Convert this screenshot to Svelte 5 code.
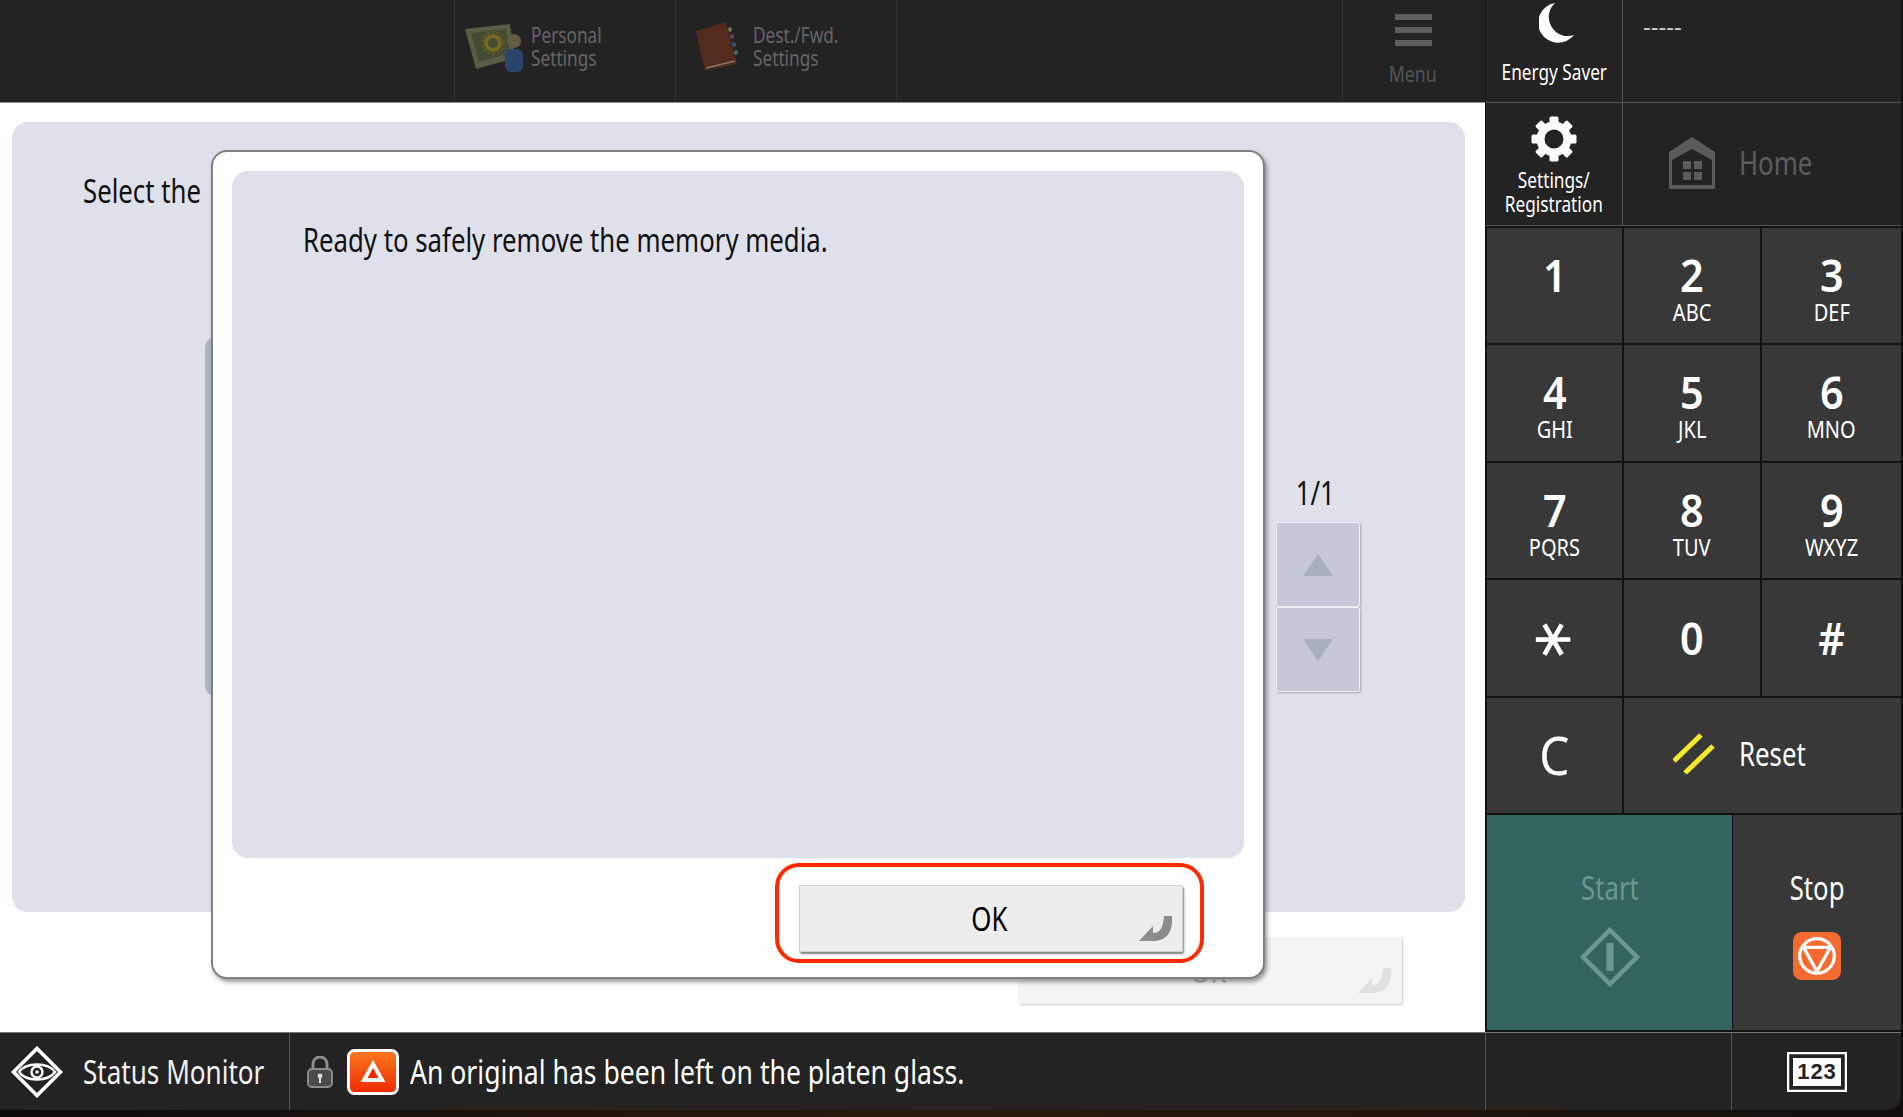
<script>
	const keys = [
		{ n: '1', s: '' },
		{ n: '2', s: 'ABC' },
		{ n: '3', s: 'DEF' },
		{ n: '4', s: 'GHI' },
		{ n: '5', s: 'JKL' },
		{ n: '6', s: 'MNO' },
		{ n: '7', s: 'PQRS' },
		{ n: '8', s: 'TUV' },
		{ n: '9', s: 'WXYZ' },
		{ n: '∗', s: '' },
		{ n: '0', s: '' },
		{ n: '#', s: '' }
	];
	const teeth = [0, 45, 90, 135, 180, 225, 270, 315];
</script>

{#snippet returnArrow(color)}
	<svg class="return" width="34" height="26" viewBox="0 0 34 26">
		<path d="M0 25 L14 10 L14 17 C20 17 24 14 25 0 L33 0 C34 16 28 25 14 25 Z" fill={color} />
	</svg>
{/snippet}

<div class="screen">
	<div class="left">
		<header class="topbar">
			<div class="tb-spacer"></div>
			<div class="tb-item">
				<svg width="58" height="52" viewBox="0 0 58 52">
					<path d="M0 7 L45 2 L50 36 L11 47 Z" fill="#62684f" />
					<path d="M6 11 L41 7 L45 31 L14 40 Z" fill="#4a5238" />
					<circle cx="28" cy="21" r="7" fill="none" stroke="#85751f" stroke-width="4" />
					<circle cx="28" cy="21" r="11" fill="none" stroke="#6e6422" stroke-width="2" stroke-dasharray="3 2" />
					<circle cx="49" cy="19" r="7" fill="#75654a" />
					<rect x="40" y="27" width="18" height="23" rx="6" fill="#2c4a78" />
				</svg>
				<span class="txt tight">Personal<br />Settings</span>
			</div>
			<div class="tb-item book">
				<svg width="42" height="50" viewBox="0 0 42 50">
					<path d="M0 9 L30 0 L41 42 L9 49 Z" fill="#5c2d1b" />
					<path d="M10 46 L39 39" stroke="#9a8478" stroke-width="1.5" />
					<path d="M32 6 l3 -1 l1 4 l-3 1 Z" fill="#8c8c4a" />
					<path d="M34 13 l3 -1 l1 4 l-3 1 Z" fill="#7d4a80" />
					<path d="M36 21 l3 -1 l1 4 l-3 1 Z" fill="#3f6c8c" />
					<path d="M38 29 l3 -1 l1 4 l-3 1 Z" fill="#4a8c6a" />
				</svg>
				<span class="txt tight">Dest./Fwd.<br />Settings</span>
			</div>
			<div class="tb-fill"></div>
			<div class="tb-menu">
				<i></i><i></i><i></i>
				<span class="txt mid">Menu</span>
			</div>
		</header>

		<main class="main">
			<section class="panel">
				<h1 class="txt">Select the</h1>
				<div class="panel-body">
					<div class="list"></div>
					<div class="pager">
						<div class="page-no"><span class="txt mid">1/1</span></div>
						<div class="page-btn"><b class="up"></b></div>
						<div class="page-btn"><b class="down"></b></div>
					</div>
				</div>
			</section>
			<div class="under-foot">
				<button class="under-ok"><span class="txt mid">OK</span>{@render returnArrow('#e0e0e0')}</button>
			</div>
		</main>
	</div>

	<aside class="side">
		<div class="sys">
			<div class="sys-cell energy">
				<svg width="36" height="40" viewBox="0 0 36 40">
					<path d="M16 0 A20 20 0 1 0 35 32 A19 19 0 0 1 16 0 Z" fill="#fff" />
				</svg>
				<span class="txt mid">Energy Saver</span>
			</div>
			<div class="sys-cell dashes">-----</div>
			<div class="sys-cell settings">
				<svg width="46" height="46" viewBox="0 0 46 46">
					<circle cx="23" cy="23" r="13.5" fill="none" stroke="#fff" stroke-width="8" />
					{#each teeth as t}
						<rect x="18.5" y="0.5" width="9" height="10" rx="1.5" fill="#fff" transform="rotate({t} 23 23)" />
					{/each}
				</svg>
				<span class="txt mid">Settings/<br />Registration</span>
			</div>
			<div class="sys-cell home">
				<svg width="46" height="52" viewBox="0 0 46 52">
					<path d="M23 0 L46 15 V52 H0 V15 Z" fill="#5b5b5b" />
					<path d="M3 23 L23 12 L43 23 V48 H3 Z" fill="#232323" />
					<rect x="14" y="24" width="8" height="8" fill="#5b5b5b" />
					<rect x="25" y="24" width="8" height="8" fill="#5b5b5b" />
					<rect x="14" y="35" width="8" height="8" fill="#5b5b5b" />
					<rect x="25" y="35" width="8" height="8" fill="#5b5b5b" />
				</svg>
				<span class="txt">Home</span>
			</div>
		</div>

		<div class="keypad">
			{#each keys as k}
				<div class="key" class:bare={k.n === '∗' || k.n === '0' || k.n === '#'}>
					<span class="num" class:star={k.n === '∗'}>{k.n}</span>
					{#if k.s}<span class="sub">{k.s}</span>{/if}
				</div>
			{/each}
			<div class="key bare clear"><span class="num">C</span></div>
			<div class="key reset">
				<svg width="42" height="42" viewBox="0 0 42 42">
					<path d="M1 29 L28 3 M12 41 L40 14" stroke="#f2ea2a" stroke-width="5" />
				</svg>
				<span class="txt">Reset</span>
			</div>
		</div>

		<div class="actions">
			<div class="start">
				<span class="txt mid">Start</span>
				<svg width="60" height="60" viewBox="0 0 60 60">
					<path d="M30 3 L57 30 L30 57 L3 30 Z" fill="none" stroke="#6d9890" stroke-width="4.5" />
					<rect x="26.5" y="16" width="7" height="28" fill="#6d9890" />
				</svg>
			</div>
			<div class="stop">
				<span class="txt mid">Stop</span>
				<svg width="48" height="48" viewBox="0 0 50 50">
					<rect width="50" height="50" rx="9" fill="#f46a30" />
					<circle cx="25" cy="25" r="18" fill="none" stroke="#fff" stroke-width="3.4" />
					<path d="M11 16 H39 L25 41 Z" fill="none" stroke="#fff" stroke-width="3.4" stroke-linejoin="round" />
				</svg>
			</div>
		</div>
	</aside>

	<footer class="statusbar">
		<div class="status-mon">
			<svg width="52" height="52" viewBox="0 0 52 52">
				<path d="M26 2.5 L49.5 26 L26 49.5 L2.5 26 Z" fill="none" stroke="#fff" stroke-width="3.6" />
				<path d="M8 26 C15 16 37 16 44 26 C37 36 15 36 8 26 Z" fill="none" stroke="#fff" stroke-width="2.4" />
				<circle cx="26" cy="26" r="5.5" fill="none" stroke="#fff" stroke-width="2.4" />
				<circle cx="26" cy="26" r="1.8" fill="#fff" />
			</svg>
			<span class="txt">Status Monitor</span>
		</div>
		<div class="status-msg">
			<svg class="lock" width="26" height="32" viewBox="0 0 26 32">
				<path d="M6 14 V8 A7 7 0 0 1 20 8 V14" fill="none" stroke="#8c8c8c" stroke-width="3" />
				<rect x="1" y="13" width="24" height="18" rx="4" fill="#4a4a4a" stroke="#8c8c8c" stroke-width="2" />
				<circle cx="13" cy="20" r="2.4" fill="#ddd" />
				<rect x="12" y="21" width="2" height="6" fill="#ddd" />
			</svg>
			<svg class="warn" width="52" height="46" viewBox="0 0 52 46">
				<defs>
					<linearGradient id="warnFill" x1="0" y1="0" x2="0" y2="1">
						<stop offset="0" stop-color="#fb7a20" />
						<stop offset="1" stop-color="#f02800" />
					</linearGradient>
				</defs>
				<rect x="1.5" y="1.5" width="49" height="43" rx="6" fill="url(#warnFill)" stroke="#fff" stroke-width="3" />
				<path d="M26 15 L35 31 H17 Z" fill="#f02800" stroke="#fff" stroke-width="4" />
			</svg>
			<span class="txt">An original has been left on the platen glass.</span>
		</div>
		<div class="status-gap"></div>
		<div class="status-count">
			<svg width="60" height="40" viewBox="0 0 60 40">
				<rect x="1" y="1" width="58" height="38" fill="none" stroke="#fff" stroke-width="2.5" />
				<rect x="6" y="6" width="48" height="28" fill="#fff" />
				<text x="30" y="27" text-anchor="middle" class="count-text">123</text>
			</svg>
		</div>
	</footer>

	<div class="dialog">
		<div class="dialog-body"><span class="txt">Ready to safely remove the memory media.</span></div>
		<div class="dialog-foot">
			<button class="ok"><span class="txt mid">OK</span>{@render returnArrow('#8c8c8c')}</button>
		</div>
	</div>
</div>

<style>
	:global(body) {
		margin: 0;
		background: #000;
	}

	.screen {
		--ui: 'Noto Sans', sans-serif;
		position: relative;
		width: 1903px;
		height: 1117px;
		overflow: hidden;
		display: grid;
		grid-template-columns: 1485px 418px;
		grid-template-rows: 1032px 78px;
		background: linear-gradient(90deg, #0d0b0a, #2a1a0e 50%, #120e0b);
		font-family: var(--ui);
		color: #fff;
	}

	/* no condensed face is installed, so the narrow panel font is squeezed */
	.txt {
		display: inline-block;
		white-space: nowrap;
		transform: scaleX(0.805);
		transform-origin: left center;
	}

	.txt.mid {
		transform-origin: center;
	}

	.left {
		display: flex;
		flex-direction: column;
		min-height: 0;
	}

	.topbar {
		height: 102px;
		flex: none;
		display: flex;
		background: #232323;
		border-bottom: 1px solid #8a8a8a;
		color: #666;
	}

	.tb-spacer {
		width: 454px;
		border-right: 1px solid #333;
	}

	.tb-item {
		width: 221px;
		border-right: 1px solid #333;
		display: flex;
		align-items: flex-start;
		padding: 22px 0 0 10px;
		gap: 8px;
		font-size: 21px;
		line-height: 23px;
		box-sizing: border-box;
	}

	.tb-item svg {
		flex: none;
		opacity: 0.85;
	}

	.tb-item .tight {
		margin-top: 2px;
		transform: scaleX(0.82);
	}

	.tb-item.book {
		padding-left: 20px;
		gap: 15px;
	}

	.tb-fill {
		width: 445px;
		border-right: 1px solid #333;
	}

	.tb-menu {
		flex: 1;
		display: flex;
		flex-direction: column;
		align-items: center;
		padding: 14px 2px 0 0;
		gap: 7px;
		font-size: 22px;
		color: #555;
	}

	.tb-menu i {
		display: block;
		width: 37px;
		height: 6px;
		background: #5f5f5f;
	}

	.tb-menu span {
		margin-top: 5px;
	}

	.main {
		flex: 1;
		background: #fff;
		display: flex;
		flex-direction: column;
	}

	.panel {
		margin: 19px 20px 0 12px;
		height: 790px;
		box-sizing: border-box;
		background: #dee1ea;
		border-radius: 16px;
		padding: 50px 0 0 71px;
		color: #111;
	}

	h1 {
		margin: 0;
		font-size: 32px;
		font-weight: 400;
		line-height: 38px;
	}

	.panel-body {
		display: flex;
		align-items: flex-end;
		margin: 127px 0 0 122px;
	}

	.list {
		width: 1059px;
		height: 359px;
		flex: none;
		background: #adb4c3;
		border-radius: 10px 0 0 10px;
	}

	.pager {
		margin: 0 0 4px 12px;
		width: 84px;
	}

	.page-no {
		font-size: 32px;
		line-height: 40px;
		text-align: center;
		margin: 0 6px 9px 0;
	}

	.page-btn {
		height: 83px;
		background: #c5c9d6;
		border: 1px solid #eef0f5;
		box-shadow: 1px 1px 2px rgba(0, 0, 0, 0.25);
		border-radius: 2px;
		display: flex;
		align-items: center;
		justify-content: center;
	}

	.up,
	.down {
		width: 0;
		height: 0;
		border-left: 15px solid transparent;
		border-right: 15px solid transparent;
	}

	.up {
		border-bottom: 22px solid #a9aebd;
	}

	.down {
		border-top: 22px solid #a9aebd;
	}

	.under-foot {
		margin-top: 25px;
		display: flex;
		justify-content: flex-end;
		padding-right: 83px;
	}

	.under-ok,
	.ok {
		position: relative;
		width: 384px;
		height: 67px;
		border: 0;
		border-radius: 2px;
		padding: 0 3px 0 0;
		font-family: var(--ui);
		font-size: 32px;
	}

	.under-ok {
		background: #f4f4f4;
		color: #bbb;
		box-shadow: 1px 1px 2px rgba(0, 0, 0, 0.2);
	}

	.ok {
		background: #ededed;
		color: #000;
		box-shadow: 1px 2px 2px rgba(0, 0, 0, 0.5), inset 0 0 0 1px #d0d0d0;
	}

	.return {
		position: absolute;
		right: 10px;
		bottom: 10px;
	}

	.ok::after {
		content: '';
		position: absolute;
		inset: -22px -21px -11px -24px;
		border: 4.5px solid #ff2a00;
		border-radius: 24px;
	}

	.side {
		display: flex;
		flex-direction: column;
		background: #121212;
		padding-right: 2px;
		border-left: 1px solid #111;
		box-sizing: border-box;
	}

	.sys {
		display: grid;
		grid-template-columns: 136px 1fr;
		grid-template-rows: 102px 122px;
		gap: 1px;
		background: #555;
		padding-bottom: 1px;
		flex: none;
	}

	.sys-cell {
		background: #232323;
		display: flex;
		flex-direction: column;
		align-items: center;
		font-size: 21px;
		line-height: 24px;
		text-align: center;
	}

	.energy .txt,
	.settings .txt {
		transform: scaleX(0.82);
	}

	.energy {
		padding-top: 3px;
		gap: 17px;
	}

	.energy svg {
		margin-left: 5px;
	}

	.dashes {
		align-items: flex-start;
		padding: 14px 0 0 20px;
		color: #ccc;
		font-size: 24px;
	}

	.settings {
		padding-top: 13px;
		gap: 6px;
	}

	.home {
		flex-direction: row;
		padding: 0 0 2px 46px;
		gap: 24px;
		color: #5d5d5d;
		font-size: 32px;
	}

	.keypad {
		margin: 2px 0 0 1px;
		height: 585px;
		flex: none;
		display: grid;
		grid-template-columns: 135px 136px 1fr;
		grid-auto-rows: 1fr;
		gap: 2px;
	}

	.key {
		background: #383838;
		display: flex;
		flex-direction: column;
		align-items: center;
		padding-top: 19px;
		box-sizing: border-box;
	}

	.key.bare {
		justify-content: center;
		padding-top: 0;
	}

	.num {
		font-size: 45px;
		line-height: 56px;
		font-weight: 600;
		transform: scaleX(0.92);
	}

	.star {
		font-family: 'DejaVu Sans', sans-serif;
		font-size: 55px;
		font-weight: 400;
		transform: rotate(30deg);
	}

	.clear .num {
		font-weight: 400;
		font-size: 52px;
	}

	.sub {
		font-size: 23px;
		line-height: 24px;
		margin-top: -3px;
		transform: scaleX(0.87);
	}

	.reset {
		grid-column: span 2;
		flex-direction: row;
		padding: 0 0 4px 49px;
		gap: 24px;
		font-size: 32px;
	}

	.actions {
		margin: 2px 0 0 1px;
		height: 215px;
		flex: none;
		display: grid;
		grid-template-columns: 245px 1fr;
		gap: 1px;
	}

	.start,
	.stop {
		display: flex;
		flex-direction: column;
		align-items: center;
		padding-top: 54px;
		gap: 20px;
		font-size: 32px;
		line-height: 38px;
	}

	.start {
		background: #33645d;
		color: #6d9890;
	}

	.stop {
		background: #383838;
		gap: 25px;
	}

	.statusbar {
		grid-column: 1 / -1;
		display: flex;
		align-items: stretch;
		background: #232323;
		border-top: 1px solid #777;
		border-radius: 0 0 14px 0;
		margin-right: 2px;
		box-sizing: border-box;
		font-size: 33px;
	}

	.statusbar svg {
		flex: none;
	}

	.status-mon {
		width: 290px;
		flex: none;
		box-sizing: border-box;
		display: flex;
		align-items: center;
		padding-left: 11px;
		gap: 20px;
		border-right: 1px solid #555;
		color: #f0f0f0;
	}

	.status-mon .txt {
		transform: scaleX(0.79);
	}

	.status-msg {
		width: 1195px;
		flex: none;
		display: flex;
		align-items: center;
		padding-left: 17px;
		box-sizing: border-box;
	}

	.lock {
		margin-right: 14px;
	}

	.warn {
		margin-right: 11px;
	}

	.status-gap {
		width: 247px;
		flex: none;
		border-left: 1px solid #555;
		border-right: 1px solid #555;
		box-sizing: border-box;
	}

	.status-count {
		flex: 1;
		display: flex;
		align-items: center;
		justify-content: center;
	}

	.count-text {
		font-family: 'Liberation Sans', sans-serif;
		font-size: 22px;
		font-weight: 700;
		letter-spacing: 1px;
		fill: #232323;
	}

	.dialog {
		position: absolute;
		left: 211px;
		top: 150px;
		width: 1054px;
		height: 829px;
		box-sizing: border-box;
		background: #fff;
		border: 2px solid #808080;
		border-radius: 16px;
		box-shadow: 2px 3px 4px rgba(0, 0, 0, 0.4);
		padding: 19px 19px 0;
		display: flex;
		flex-direction: column;
		color: #111;
	}

	.dialog-body {
		height: 687px;
		flex: none;
		background: #dee1ea;
		border-radius: 16px;
		padding: 50px 0 0 71px;
		box-sizing: border-box;
		font-size: 32px;
		line-height: 38px;
	}

	.dialog-foot {
		display: flex;
		justify-content: flex-end;
		padding: 27px 61px 0 0;
	}
</style>
